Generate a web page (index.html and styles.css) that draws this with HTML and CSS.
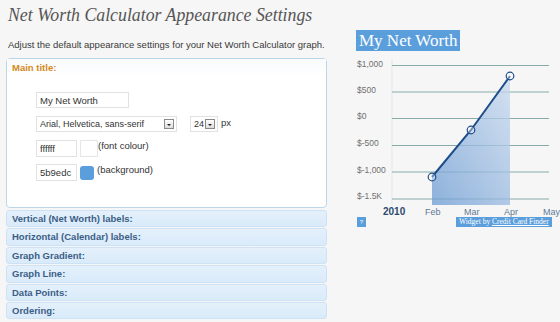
FILE: index.html
```html
<!DOCTYPE html>
<html lang="en">
<head>
  <meta charset="UTF-8">
  <title>Net Worth Calculator Appearance Settings</title>
  <link rel="stylesheet" href="styles.css">
</head>
<body>
  <div class="page">
    <div class="settings">
      <h1>Net Worth Calculator Appearance Settings</h1>
      <p class="intro">Adjust the default appearance settings for your Net Worth Calculator graph.</p>

      <div class="panel open">
        <div class="panel-head">Main title:</div>
        <div class="panel-body">
          <div class="row">
            <input class="field title-field" type="text" value="My Net Worth">
          </div>
          <div class="row">
            <div class="select font-select"><span>Arial, Helvetica, sans-serif</span><i class="arrow"></i></div>
            <div class="select size-select"><span>24</span><i class="arrow"></i></div>
            <span class="unit">px</span>
          </div>
          <div class="row">
            <input class="field colour-field" type="text" value="ffffff">
            <span class="swatch white"></span>
            <span class="note">(font colour)</span>
          </div>
          <div class="row">
            <input class="field colour-field" type="text" value="5b9edc">
            <span class="swatch blue"></span>
            <span class="note">(background)</span>
          </div>
        </div>
      </div>

      <div class="panel closed">Vertical (Net Worth) labels:</div>
      <div class="panel closed">Horizontal (Calendar) labels:</div>
      <div class="panel closed">Graph Gradient:</div>
      <div class="panel closed">Graph Line:</div>
      <div class="panel closed">Data Points:</div>
      <div class="panel closed">Ordering:</div>
    </div>

    <div class="widget">
      <div class="widget-title">My Net Worth</div>
      <svg class="chart" width="208" height="162" viewBox="0 0 208 162">
        <defs>
          <linearGradient id="fill" x1="0" y1="1" x2="1" y2="0">
            <stop offset="0" stop-color="#6b9bd3"/>
            <stop offset="1" stop-color="#c9daee"/>
          </linearGradient>
        </defs>
        <line x1="40" y1="4" x2="40" y2="150" stroke="#e6e6e6"/>
        <g stroke="#86aaa8" stroke-width="1">
          <line x1="40" y1="10.5" x2="197" y2="10.5"/>
          <line x1="40" y1="37" x2="197" y2="37"/>
          <line x1="40" y1="63.5" x2="197" y2="63.5"/>
          <line x1="40" y1="90.5" x2="197" y2="90.5"/>
          <line x1="40" y1="117" x2="197" y2="117"/>
          <line x1="40" y1="144" x2="197" y2="144"/>
        </g>
        <polygon points="80,122 119,75 158,21 158,150 80,150" fill="url(#fill)" opacity="0.75"/>
        <polyline points="80,122 119,75 158,21" fill="none" stroke="#1d4d8b" stroke-width="2"/>
        <g fill="rgba(255,255,255,0.35)" stroke="#1d4d8b" stroke-width="1.2">
          <circle cx="80" cy="122" r="3.8"/>
          <circle cx="119" cy="75" r="3.8"/>
          <circle cx="158" cy="21" r="3.8"/>
        </g>
        <g class="ylabels">
          <text x="5" y="12">$1,000</text>
          <text x="5" y="38">$500</text>
          <text x="5" y="64">$0</text>
          <text x="5" y="91">$-500</text>
          <text x="5" y="118">$-1,000</text>
          <text x="5" y="144">$-1.5K</text>
        </g>
        <text class="year" x="31" y="160">2010</text>
        <g class="xlabels">
          <text x="73" y="160">Feb</text>
          <text x="112" y="160">Mar</text>
          <text x="152" y="160">Apr</text>
          <text x="191" y="160">May</text>
        </g>
      </svg>
      <div class="widget-foot">
        <span class="help">?</span>
        <span class="credit">Widget by <u>Credit Card Finder</u></span>
      </div>
    </div>
  </div>
</body>
</html>
```

FILE: styles.css
```css
body {
  margin: 0;
  background-color: #f6f6f6;
  font-family: "Liberation Sans", Arial, sans-serif;
  color: #333;
}
.page {
  display: flex;
  align-items: flex-start;
  height: 322px;
  overflow: hidden;
}
.settings {
  width: 321px;
  margin-left: 6px;
}
h1 {
  margin: 4px 0 0 2px;
  font-family: "Liberation Serif", Georgia, serif;
  font-style: italic;
  font-weight: normal;
  font-size: 17.8px;
  line-height: 22px;
  color: #555;
}
.intro {
  margin: 13px 0 0 2px;
  font-size: 9.5px;
  line-height: 12px;
  color: #3a3a3a;
}
.panel {
  border: 1px solid #b9d7ec;
  border-radius: 4px;
}
.open {
  margin-top: 7px;
  height: 148px;
  background: #fff;
}
.panel-head {
  height: 17px;
  line-height: 17px;
  padding-left: 5px;
  font-size: 9.5px;
  font-weight: bold;
  color: #d48a1c;
  background: linear-gradient(#f8fafb, #fff);
}
.panel-body {
  padding: 16px 0 0 29px;
}
.row {
  display: flex;
  align-items: flex-start;
  margin-bottom: 8px;
}
.field {
  box-sizing: border-box;
  height: 16px;
  border: 1px solid #e2e2e2;
  padding: 0 3px;
  font-family: "Liberation Sans", Arial, sans-serif;
  font-size: 9.5px;
  color: #333;
  background: #fff;
  outline: none;
}
.title-field {
  width: 93px;
}
.colour-field {
  width: 41px;
  height: 17px;
  margin-right: 3px;
}
.row:nth-child(4) {
  margin-top: -1px;
}
.select {
  box-sizing: border-box;
  display: flex;
  align-items: center;
  justify-content: space-between;
  height: 16px;
  border: 1px solid #e2e2e2;
  padding: 0 2px 0 3px;
  font-size: 9px;
  background: #fff;
}
.font-select {
  width: 141px;
}
.size-select {
  width: 28px;
  margin-left: 13px;
  padding-left: 3px;
}
.arrow {
  position: relative;
  box-sizing: border-box;
  width: 10px;
  height: 10px;
  border: 1px solid #8a8a8a;
  background: linear-gradient(#fff, #dcdcdc);
}
.arrow::after {
  content: "";
  position: absolute;
  left: 2px;
  top: 4px;
  border-left: 2px solid transparent;
  border-right: 2px solid transparent;
  border-top: 2px solid #222;
}
.unit {
  margin-left: 3px;
  font-size: 9.5px;
  line-height: 14px;
}
.swatch {
  box-sizing: border-box;
  width: 18px;
  height: 17px;
  border: 1px solid #e6e6e6;
  background: #fff;
}
.swatch.blue {
  width: 14px;
  height: 14px;
  margin-top: 2px;
  margin-right: 3px;
  border: none;
  border-radius: 3px;
  background: #5b9edc;
}
.note {
  font-size: 9.5px;
  line-height: 11px;
}
.closed {
  box-sizing: border-box;
  height: 17.4px;
  margin-top: 1px;
  padding-left: 5px;
  line-height: 15px;
  border-color: #cde2f4;
  border-radius: 3px;
  background: linear-gradient(#e4f1fc, #d9eaf9);
  font-size: 9.5px;
  font-weight: bold;
  color: #3c5e86;
}
.open + .closed {
  margin-top: 2px;
}
.widget {
  width: 208px;
  margin-left: 25px;
  padding-top: 30px;
}
.widget-title {
  display: inline-block;
  margin-left: 4px;
  height: 21px;
  padding: 0 3px;
  line-height: 21px;
  background: #5b9edc;
  color: #fff;
  font-family: "Liberation Serif", Georgia, serif;
  font-size: 17px;
}
.chart {
  display: block;
  margin-top: 4px;
}
.ylabels text {
  font-family: "Liberation Sans", Arial, sans-serif;
  font-size: 8.5px;
  fill: #707070;
}
.year {
  font-family: "Liberation Sans", Arial, sans-serif;
  font-size: 10px;
  font-weight: bold;
  fill: #2b4a6d;
}
.xlabels text {
  font-family: "Liberation Sans", Arial, sans-serif;
  font-size: 9px;
  fill: #5f7a95;
}
.widget-foot {
  display: flex;
  align-items: flex-start;
  height: 10px;
}
.help {
  width: 9px;
  height: 10px;
  margin-left: 5px;
  background: #5b9edc;
  color: #fff;
  font-size: 6px;
  line-height: 10px;
  text-align: center;
}
.credit {
  margin-left: 90px;
  height: 10px;
  padding: 0 3px;
  background: #5b9edc;
  color: #fff;
  font-family: "Liberation Serif", Georgia, serif;
  font-size: 7.5px;
  line-height: 10px;
  white-space: nowrap;
}
```
